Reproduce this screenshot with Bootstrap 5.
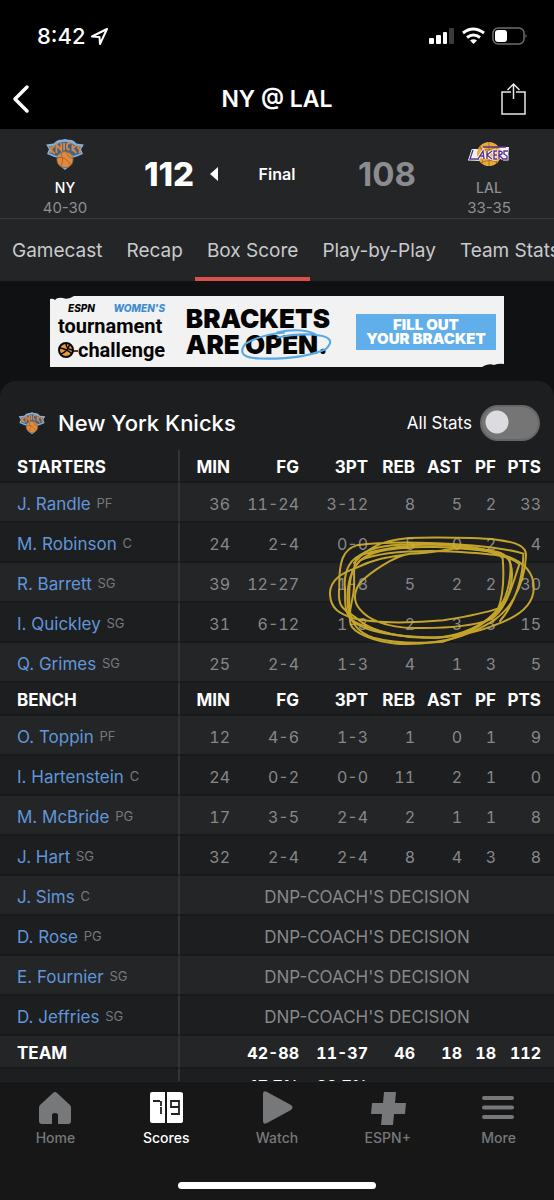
<!DOCTYPE html>
<html lang="en" data-bs-theme="dark">
<head>
<meta charset="utf-8">
<meta name="viewport" content="width=device-width, initial-scale=1">
<title>NY @ LAL</title>
<link href="https://cdn.jsdelivr.net/npm/bootstrap@5.3.0/dist/css/bootstrap.min.css" rel="stylesheet">
<style>
body{font-family:Inter,"Liberation Sans",sans-serif;background:#000;color:#fff;line-height:20px}
a{text-decoration:none}
.shell{height:100vh}
.status-bar{height:68px;padding:4px 27px 0 37px;font-size:22px;font-weight:500}
.title-bar{height:61px;padding:0 24px 0 6px}
.title-bar h1{font-size:23px;font-weight:600;line-height:28px}
.icon-btn{width:32px;height:40px;color:#fff}
.icon-btn.back{width:50px}
.score-head{background:#242527;border-bottom:1px solid #3a3b3d;height:90px}
.team-box{width:130px;font-size:15px;line-height:20px;color:#8e8f92}
.team-box .abbr{font-weight:500;font-size:14px;margin-top:7px}
.points{font-size:33px;font-weight:800;line-height:40px}
.score-side{flex:1 1 0}
.final-cell{width:74px;font-size:16px;font-weight:600}
.dim{color:#8b8c90;font-weight:700}
.tab-strip{background:#242527;height:62px;padding-left:4px;overflow:hidden}
.tab-strip a{color:#c9cacc;font-size:19px;line-height:24px;padding:20px 8px 14px;margin-right:8px;border-bottom:4px solid transparent;white-space:nowrap}
.tab-strip a.active{border-color:#dc5147;padding-left:12px;padding-right:12px;margin-left:-4px;margin-right:4px}
.scroller{flex:1 1 0;min-height:0;overflow:hidden;background:#101113}
.promo{margin:15px 50px 14px;height:71px;background:#f2f2f2;color:#050505}
.promo-logo{width:110px}
.promo-small{font-size:10px;line-height:12px;font-weight:800;padding:0 3px 0 10px}
.promo-small .blue{color:#3f8ccd}
.promo-name{font-family:Roboto,"Liberation Sans",sans-serif;font-size:20px;line-height:24px;font-weight:700}
.promo-head{font-size:26px;line-height:26px;font-weight:900}
.promo-btn{background:#60aeea;color:#fff;font-size:15px;line-height:14px;font-weight:900;width:140px;height:36px;border:0}
.swoosh{left:-6px;top:0;width:96px;height:32px}
.box-panel{background:#1d1e20;border-radius:16px 16px 0 0}
.panel-head{height:69px;padding:15px 14px 0 18px}
.panel-head h2{font-size:22px;line-height:28px;font-weight:500}
.panel-head label{font-size:17px}
.form-check-input.stat-switch{width:60px;height:36px;margin:0;background-color:#757575;border:2px solid #656668;background-size:30px 30px;background-position:0 0;background-image:radial-gradient(circle at 15px 15px,#dcdce0 11px,transparent 12px);background-repeat:no-repeat}
.stats{table-layout:fixed;width:100%;border-collapse:separate;border-spacing:0;font-size:17px;line-height:20px}
.stats th,.stats td{height:40px;padding:3px 0 0;text-align:right;border-bottom:2px solid #18191b;vertical-align:middle;white-space:nowrap}
.stats td{color:#87888a;font-size:16px;font-variant-numeric:tabular-nums}
.stats tr>:first-child{text-align:left;padding-left:17px;border-right:2px solid #333436;font-weight:400}
.stats tr>:last-child{padding-right:13px}
.stats .band>*{height:33px;padding-top:2px;font-weight:700!important;color:#fff}
.stats .lit>*{background:#242527}
.stats .dnp td{text-align:center;padding-right:0!important;font-size:17px;font-variant-numeric:normal}
.stats a{color:#6196da}
.stats small{color:#77787a;font-size:13px;line-height:13px;vertical-align:2px;margin-left:1px}
.c-min{width:50px}.c-long{width:69px}.c-mid{width:47px}.c-pf{width:34px}.c-pts{width:58px}
.scribble{right:0;top:71px;width:244px;height:140px;pointer-events:none}
.tab-bar{background:#171718;height:119px;border-top:1px solid #222325}
.tab-bar a{flex:1 1 0;color:#77787a;font-size:14px;font-weight:500;line-height:22px;padding-top:7px}
.tab-bar a.active{color:#fff}
.tab-bar svg{width:38px;height:38px}
.home-pill{width:198px;height:7px;background:#fff;margin:0 auto 11px}
</style>
</head>
<body>
<svg class="d-none">
<symbol id="knicks" viewBox="0 0 42 36">
<path d="M1 8 9 7Q13 2 18 3Q21 1 24 3Q30 2 33 7L41 8 38 13 40 18 33 21 29 22Q30 29 21 35Q12 29 13 22L9 21 2 18 4 13Z" fill="#7fb2df"/>
<path d="M4 10 10 9Q21 1 32 9L38 10 36 14 38 17 30 20Q21 11 12 20L4 17 6 14Z" fill="#3f6386"/>
<circle cx="21" cy="24" r="8.5" fill="#e08b3d" stroke="#8a6a50"/>
<path d="M13 22Q22 20 27 30M17 17Q20 25 17 31M23 16Q23 21 29 23" fill="none" stroke="#a7642e"/>
<path d="M6 10v7M10 9 6 13 10 18M12 17V8L17 14V6M20 6v8M27 7Q23 5 23 10Q23 14 26 13M29 8v7M33 9 29 12 33 17M38 10Q34 9 35 12Q38 14 36 17" fill="none" stroke="#dc8540" stroke-width="2"/>
</symbol>
</svg>
<div class="shell d-flex flex-column">
<div class="status-bar d-flex align-items-center justify-content-between">
<div class="d-flex align-items-center gap-1"><span>8:42</span>
<svg width="20" height="20" viewBox="0 0 20 20" fill="none" stroke="#fff" stroke-width="2" stroke-linejoin="round"><path d="M17 3 2 10.500 9.500 11 10 18Z"/></svg></div>
<svg width="100" height="20" viewBox="0 0 100 20">
<g fill="#fff"><rect x="2" y="12" width="5" height="6" rx="1"/><rect x="9" y="9" width="5" height="9" rx="1"/><rect x="16" y="6" width="4" height="12" rx="1"/></g><rect x="22" y="2" width="5" height="16" rx="1" fill="#3b3b3b"/>
<g fill="none" stroke="#fff" stroke-width="3"><path d="M36 7Q46 -1 57 7"/><path d="M40 11.500Q46.500 6.500 53 11.500"/></g><path d="M46.500 18 43 14.500Q46.500 12 50 14.500Z" fill="#fff"/>
<rect x="66" y="2" width="31" height="16" rx="5" fill="none" stroke="#6d6d6d" stroke-width="1.500"/><rect x="68" y="4" width="12" height="12" rx="3" fill="#fff"/><path d="M98.500 8Q101 10 98.500 12Z" fill="#6d6d6d"/></svg>
</div>
<header class="title-bar d-flex align-items-center justify-content-between">
<button class="icon-btn back btn p-0 border-0 text-start" aria-label="Back"><svg width="32" height="32" viewBox="0 0 32 32" fill="none" stroke="#fff" stroke-width="3.500" stroke-linecap="round" stroke-linejoin="round"><path d="M21 4 9 16 21 28"/></svg></button>
<h1 class="m-0">NY @ LAL</h1>
<button class="icon-btn btn p-0 border-0" aria-label="Share"><svg width="32" height="36" viewBox="0 0 32 36" fill="none" stroke="#e8e8e8" stroke-width="1.500"><path d="M13 11H4V33H27V11H18M15.500 18V3M9.500 9 15.500 3 21.500 9"/></svg></button>
</header>
<section class="score-head d-flex text-center flex-shrink-0">
<div class="team-box d-flex flex-column align-items-center"><svg class="mt-2" width="42" height="34"><use href="#knicks"/></svg><div class="abbr text-white">NY</div><div>40-30</div></div>
<div class="score-side d-flex align-items-center justify-content-center gap-3"><span class="points">112</span><svg class="me-2" width="8" height="14" viewBox="0 0 8 14"><path d="M8 0V14L0 7Z" fill="#fff"/></svg></div>
<div class="final-cell align-self-center">Final</div>
<div class="score-side d-flex align-items-center justify-content-end"><span class="points dim me-2">108</span></div>
<div class="team-box d-flex flex-column align-items-center"><svg class="mt-2" width="42" height="34" viewBox="0 0 42 34"><path d="M4 12H12Q20 0 29 10H41L40 21H34L28 24Q21 34 13 24L1 23Z" fill="#f0eef0"/><circle cx="21" cy="17" r="12" fill="#eaa93a"/><path d="M11 11Q20 16 30 9M13 26Q22 21 30 26M21 5V29M12 9Q17 17 14 26M30 9Q25 17 29 26" stroke="#9d6a20" fill="none" stroke-width=".8"/><path d="M5 13 2 22H11M10 22 15 14 16 22M12 19H16M19 14V22M24 14 19 18 24 22M29 14H26V22H29M26 18H29M31 22V14Q35 14 34 17L31 18 35 22M40 14H36V17L39 19V22H35" stroke="#fff" stroke-width="3" fill="none"/><path d="M5 13 2 22H11M10 22 15 14 16 22M12 19H16M19 14V22M24 14 19 18 24 22M29 14H26V22H29M26 18H29M31 22V14Q35 14 34 17L31 18 35 22M40 14H36V17L39 19V22H35M15 10H38" stroke="#55308a" stroke-width="1.400" fill="none"/></svg><div class="abbr">LAL</div><div>33-35</div></div>
</section>
<nav class="tab-strip d-flex align-items-end flex-shrink-0"><a href="#">Gamecast</a><a href="#">Recap</a><a href="#" class="active">Box Score</a><a href="#">Play-by-Play</a><a href="#">Team Stats</a></nav>
<main class="scroller d-flex flex-column">
<section class="promo d-flex align-items-center justify-content-between flex-shrink-0 ps-2 position-relative">
<svg class="position-absolute top-0 start-0" width="24" height="4"><path d="M0 0H24Q18 4 13 2Q7 1 5 4Q3 2 0 3Z" fill="#101113"/></svg>
<svg class="position-absolute bottom-0 end-0" width="22" height="4"><path d="M22 4H0Q6 0 12 2Q17 0 22 1Z" fill="#101113"/></svg>
<div class="promo-logo"><div class="promo-small d-flex justify-content-between"><i>ESPN</i><i class="blue">WOMEN'S</i></div><div class="promo-name">tournament</div>
<div class="promo-name d-flex align-items-center"><svg class="flex-shrink-0" width="20" height="18" viewBox="0 0 20 18"><circle cx="8" cy="9" r="7" fill="#ec9a36" stroke="#0a0a0a" stroke-width="2"/><path d="M2 7Q9 8 14 13M3 13Q9 11 12 3M8 2Q8 9 15 9M15 10H20" stroke="#0a0a0a" fill="none" stroke-width="1.500"/></svg>challenge</div></div>
<div class="promo-head">BRACKETS<br>ARE <span class="position-relative">OPEN.<svg class="swoosh position-absolute" viewBox="0 0 92 30" fill="none" stroke="#57a9e6" stroke-width="2"><path d="M44 3Q20 5 6 14Q-4 27 20 28Q60 29 83 19Q96 7 70 5Q55 4 36 8M36 3Q60 -2 74 5"/></svg></span></div>
<button class="promo-btn p-0 me-2 ms-2">FILL OUT<br>YOUR BRACKET</button>
</section>
<section class="box-panel flex-shrink-0">
<div class="panel-head d-flex align-items-center">
<svg width="28" height="24"><use href="#knicks"/></svg><h2 class="m-0 ms-2 ps-1">New York Knicks</h2>
<div class="ms-auto d-flex align-items-center gap-2"><label for="all">All Stats</label><input class="form-check-input stat-switch rounded-pill" type="checkbox" role="switch" id="all"></div>
</div>
<div class="position-relative">
<table class="stats">
<colgroup><col><col class="c-min"><col class="c-long"><col class="c-long"><col class="c-mid"><col class="c-mid"><col class="c-pf"><col class="c-pts"></colgroup>
<tbody>
<tr class="band"><th>STARTERS</th><th>MIN</th><th>FG</th><th>3PT</th><th>REB</th><th>AST</th><th>PF</th><th>PTS</th></tr>
<tr class="lit"><th><a href="#">J. Randle</a> <small>PF</small></th><td>36</td><td>11-24</td><td>3-12</td><td>8</td><td>5</td><td>2</td><td>33</td></tr>
<tr><th><a href="#">M. Robinson</a> <small>C</small></th><td>24</td><td>2-4</td><td>0-0</td><td>5</td><td>0</td><td>2</td><td>4</td></tr>
<tr class="lit"><th><a href="#">R. Barrett</a> <small>SG</small></th><td>39</td><td>12-27</td><td>1-8</td><td>5</td><td>2</td><td>2</td><td>30</td></tr>
<tr><th><a href="#">I. Quickley</a> <small>SG</small></th><td>31</td><td>6-12</td><td>1-3</td><td>2</td><td>3</td><td>3</td><td>15</td></tr>
<tr class="lit"><th><a href="#">Q. Grimes</a> <small>SG</small></th><td>25</td><td>2-4</td><td>1-3</td><td>4</td><td>1</td><td>3</td><td>5</td></tr>
<tr class="band"><th>BENCH</th><th>MIN</th><th>FG</th><th>3PT</th><th>REB</th><th>AST</th><th>PF</th><th>PTS</th></tr>
<tr class="lit"><th><a href="#">O. Toppin</a> <small>PF</small></th><td>12</td><td>4-6</td><td>1-3</td><td>1</td><td>0</td><td>1</td><td>9</td></tr>
<tr><th><a href="#">I. Hartenstein</a> <small>C</small></th><td>24</td><td>0-2</td><td>0-0</td><td>11</td><td>2</td><td>1</td><td>0</td></tr>
<tr class="lit"><th><a href="#">M. McBride</a> <small>PG</small></th><td>17</td><td>3-5</td><td>2-4</td><td>2</td><td>1</td><td>1</td><td>8</td></tr>
<tr><th><a href="#">J. Hart</a> <small>SG</small></th><td>32</td><td>2-4</td><td>2-4</td><td>8</td><td>4</td><td>3</td><td>8</td></tr>
<tr class="lit dnp"><th><a href="#">J. Sims</a> <small>C</small></th><td colspan="7">DNP-COACH'S DECISION</td></tr>
<tr class="dnp"><th><a href="#">D. Rose</a> <small>PG</small></th><td colspan="7">DNP-COACH'S DECISION</td></tr>
<tr class="lit dnp"><th><a href="#">E. Fournier</a> <small>SG</small></th><td colspan="7">DNP-COACH'S DECISION</td></tr>
<tr class="dnp"><th><a href="#">D. Jeffries</a> <small>SG</small></th><td colspan="7">DNP-COACH'S DECISION</td></tr>
<tr class="band lit"><th>TEAM</th><td></td><td>42-88</td><td>11-37</td><td>46</td><td>18</td><td>18</td><td>112</td></tr>
<tr class="band"><th></th><td></td><td>47.7%</td><td>29.7%</td><td></td><td></td><td></td><td></td></tr>
</tbody></table>
<svg class="scribble position-absolute" viewBox="0 0 732 420" fill="none" stroke="#d6b32c" stroke-width="6" stroke-linecap="round" opacity=".9">
<path d="M132 126C180 70 240 50 330 50C430 49 500 50 560 56C620 64 650 75 648 105C646 150 630 200 610 235C580 285 540 310 480 335C420 362 330 372 260 368C190 362 130 335 122 310C112 270 130 240 132 200C134 160 128 130 140 112C170 80 230 72 300 70C400 66 500 82 560 92C590 98 606 120 606 160C605 220 580 265 530 300C480 335 430 350 380 350C300 350 200 340 150 300C110 265 80 270 88 200C86 120 100 85 140 73C220 62 340 64 440 70C520 76 600 85 640 98C640 140 630 230 570 300"/>
<path d="M140 130C170 90 230 82 340 78C440 76 520 84 565 98C620 112 672 140 671 200C672 250 630 285 560 310C500 335 430 350 340 350C260 350 200 330 150 310C90 290 110 230 104 190C104 150 120 110 160 100C240 75 350 66 430 72C500 78 560 90 598 112C606 140 600 200 580 240C550 290 490 335 400 362C330 368 250 366 190 350C130 332 118 290 118 250C116 200 122 150 140 130"/>
<path d="M300 98C230 108 190 115 140 140C100 155 58 175 60 220C62 265 90 278 130 292C200 310 330 305 400 298C460 288 530 275 565 262C580 220 582 160 578 112C560 90 520 88 440 82C380 90 350 98 300 98C250 105 180 155 150 185C130 215 128 240 150 265C170 290 220 322 320 321C400 322 480 318 540 296C590 270 610 180 628 130C600 102 540 98 440 92C340 88 220 88 150 118C110 160 108 230 118 290C150 330 250 348 380 350C450 345 500 320 540 290"/>
</svg>
</div>
</section>
</main>
<footer class="tab-bar d-flex flex-column justify-content-between flex-shrink-0">
<nav class="d-flex text-center">
<a href="#"><svg viewBox="0 0 38 38"><path d="M4 16 17 4Q19 2 21 4L34 16Q35 17 35 19V32Q35 35 32 35H22V26Q22 24 19 24Q16 24 16 26V35H6Q3 35 3 32V19Q3 17 4 16Z" fill="#77787a"/></svg><div>Home</div></a>
<a href="#" class="active"><svg viewBox="0 0 38 38"><path d="M5 3H18V34H5Q3 34 3 32V5Q3 3 5 3M20 3H33Q36 3 36 5V32Q36 34 33 34H20Z" fill="#fff"/><path d="M6 12H14V25" fill="none" stroke="#222" stroke-width="1.800" stroke-dasharray="7 1 5 1"/><path d="M32 18H24V12H32V25H24" fill="none" stroke="#222" stroke-width="1.800"/></svg><div>Scores</div></a>
<a href="#"><svg viewBox="0 0 38 38"><path d="M5 5Q5 1 9 3L33 16Q36 18 33 21L9 34Q5 36 5 32Z" fill="#77787a"/></svg><div>Watch</div></a>
<a href="#"><svg viewBox="0 0 38 38"><path d="M15 3H27L26 14H37L36 25H25L24 36H12L13 25H2L3 14H14Z" fill="#77787a"/></svg><div>ESPN+</div></a>
<a href="#"><svg viewBox="0 0 38 38"><path d="M4 9H32M4 18.500H32M4 28H32" stroke="#77787a" stroke-width="4" stroke-linecap="round"/></svg><div>More</div></a>
</nav>
<div class="home-pill rounded-pill"></div>
</footer>
</div>
<script src="https://cdn.jsdelivr.net/npm/bootstrap@5.3.0/dist/js/bootstrap.bundle.min.js"></script>
</body>
</html>
